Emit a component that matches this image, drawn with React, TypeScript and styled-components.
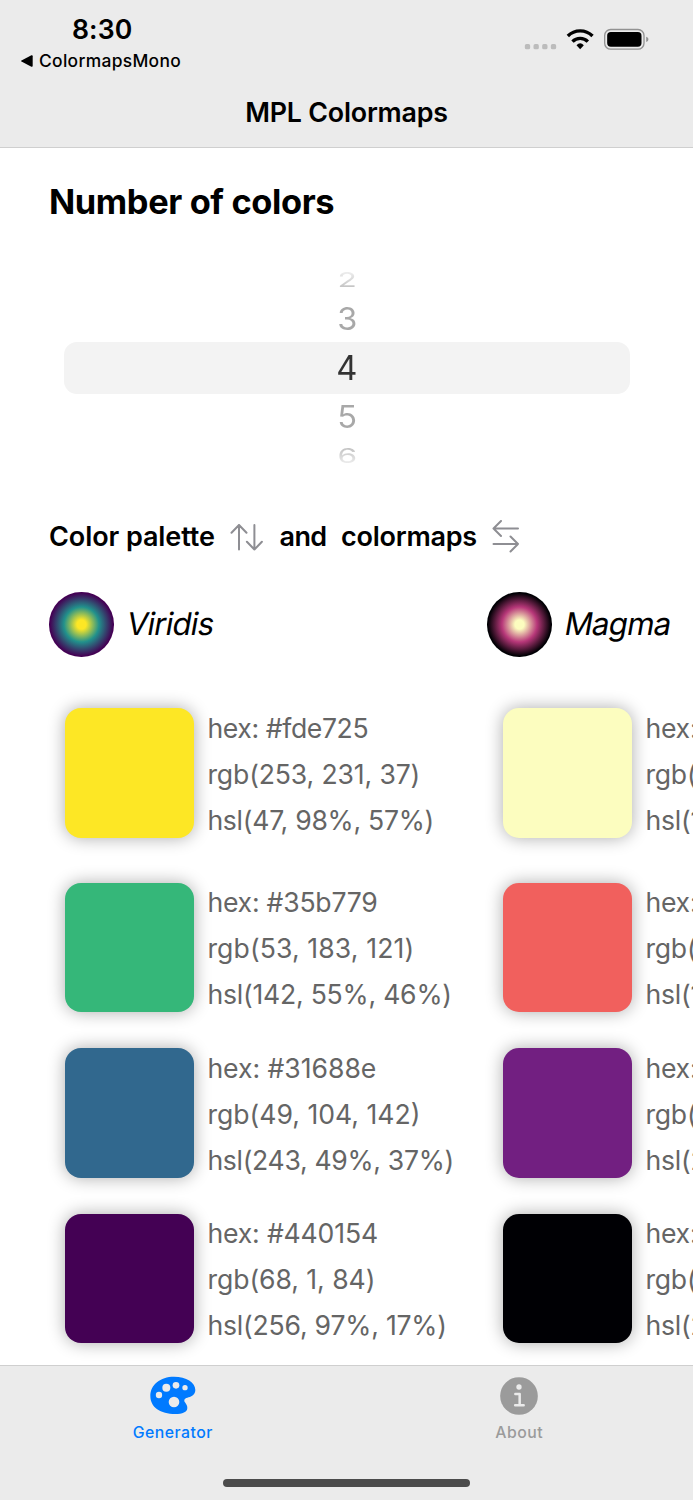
import React from "react";
import styled, { createGlobalStyle } from "styled-components";

const GlobalStyle = createGlobalStyle`
  *, *::before, *::after { box-sizing: border-box; }
  html, body { margin: 0; padding: 0; background: #fff; overflow: hidden; }
  body { font-family: Inter, "Liberation Sans", sans-serif; color: #000; }
  svg { display: block; flex: none; }
`;

const Screen = styled.div`
  width: 693px;
  height: 1500px;
  display: flex;
  flex-direction: column;
  overflow: hidden;
  background: #fff;
`;

const Header = styled.header`
  flex: none;
  height: 148px;
  background: #ebebeb;
  border-bottom: 1px solid #cfcfcf;
`;

const StatusBar = styled.div`
  height: 76px;
  display: flex;
  justify-content: space-between;
`;

const StatusLeft = styled.div`
  padding: 13px 0 0 21px;
`;

const Clock = styled.div`
  padding-left: 51px;
  line-height: 32px;
  font-size: 26.6px;
  font-weight: 600;
  letter-spacing: 0.1px;
`;

const BackLink = styled.div`
  display: flex;
  align-items: center;
  gap: 6px;
  line-height: 31px;
  font-size: 17.4px;
  font-weight: 500;
  letter-spacing: 0.32px;
`;

const StatusIcons = styled.div`
  padding: 27px 44px 0 0;
`;

const NavTitle = styled.h1`
  margin: 0;
  line-height: 73px;
  text-align: center;
  font-size: 26.8px;
  font-weight: 600;
  letter-spacing: -0.2px;
`;

const Content = styled.main`
  flex: 1;
  min-height: 0;
  overflow: hidden;
  padding: 33px 0 0 49px;
`;

const SectionTitle = styled.h2`
  margin: 0;
  line-height: 41px;
  font-size: 34.4px;
  font-weight: 700;
  letter-spacing: -0.38px;
`;

const Picker = styled.div`
  width: 566px;
  margin: 41.5px 0 0 14.5px;
  display: flex;
  flex-direction: column;
`;

const PickerRow = styled.div<{ $h: number; $selected?: boolean }>`
  height: ${(p) => p.$h}px;
  display: flex;
  align-items: center;
  justify-content: center;
  padding-left: 1px;
  border-radius: 13px;
  background: ${(p) => (p.$selected ? "#f3f3f3" : "transparent")};
`;

const PickerDigit = styled.span<{ $squash: number; $ink: string }>`
  font-size: 33.4px;
  line-height: 40px;
  transform: scale(${(p) => 0.9 + p.$squash * 0.08}, ${(p) => p.$squash});
  background: ${(p) => p.$ink};
  background-clip: text;
  -webkit-background-clip: text;
  color: transparent;
`;

const HintRow = styled.div`
  display: flex;
  align-items: center;
  height: 40px;
  margin-top: 46px;
  font-size: 27px;
  font-weight: 600;
  white-space: nowrap;
`;

const HintWord = styled.span<{ $w: number; $tracking: number }>`
  flex: none;
  width: ${(p) => p.$w}px;
  letter-spacing: ${(p) => p.$tracking}px;
`;

const HintIcon = styled.span<{ $w: number }>`
  flex: none;
  width: ${(p) => p.$w}px;
`;

const Maps = styled.div`
  display: flex;
  margin-top: 35.5px;
`;

const MapColumn = styled.section`
  flex: none;
  width: 438px;
`;

const MapHead = styled.div`
  display: flex;
  align-items: center;
  height: 65px;
`;

const Disc = styled.span<{ $stops: string[] }>`
  flex: none;
  width: 64.5px;
  height: 64.5px;
  margin-right: 13px;
  border-radius: 50%;
  background: radial-gradient(
    circle closest-side,
    ${(p) => p.$stops[0]} 14%,
    ${(p) => p.$stops[1]} 54%,
    ${(p) => p.$stops[2]} 97%
  );
`;

const MapName = styled.span`
  font-size: 31.2px;
  line-height: 41px;
  letter-spacing: -0.75px;
  transform: skewX(-10deg);
`;

const Entries = styled.div`
  display: flex;
  flex-direction: column;
  gap: 27.4px;
  padding: 47px 0 0 16px;
`;

const Entry = styled.div<{ $first: boolean }>`
  display: flex;
  align-items: center;
  height: 138px;
  margin-bottom: ${(p) => (p.$first ? 9.4 : 0)}px;
`;

const Swatch = styled.span<{ $color: string }>`
  flex: none;
  width: 129.4px;
  height: 129.4px;
  margin-right: 13px;
  border-radius: 16px;
  background: ${(p) => p.$color};
  box-shadow: 0 0 17px rgba(0, 0, 0, 0.33);
`;

const Values = styled.div`
  display: flex;
  flex-direction: column;
  padding-top: 1.4px;
`;

const Value = styled.span<{ $tracking: number }>`
  line-height: 46px;
  font-size: 26.6px;
  color: #656565;
  white-space: nowrap;
  letter-spacing: ${(p) => p.$tracking}px;
`;

const TabBar = styled.nav`
  flex: none;
  height: 135.5px;
  display: grid;
  grid-template-columns: 1fr 1fr;
  grid-template-rows: 1fr auto;
  background: #ebebeb;
  border-top: 1px solid #cfcfcf;
`;

const Tab = styled.div<{ $active?: boolean }>`
  display: flex;
  flex-direction: column;
  align-items: center;
  padding: 10px 1px 0 0;
  font-size: 15.8px;
  font-weight: 500;
  letter-spacing: 0.48px;
  line-height: 20px;
  color: ${(p) => (p.$active ? "#007aff" : "#9b9b9b")};
`;

const TabIcon = styled.span`
  height: 40px;
  display: flex;
  align-items: center;
  margin-bottom: 7px;
`;

const HomeIndicator = styled.div`
  grid-column: 1 / -1;
  justify-self: center;
  width: 247px;
  height: 8px;
  margin-bottom: 13.5px;
  border-radius: 4px;
  background: #4b4b4b;
`;

const StatusGlyphs = () => (
  <svg width="125" height="24" viewBox="72.500 51 375 72">
    {[83, 109, 135, 161].map((x) => (
      <rect key={x} x={x - 8} y="102" width="16" height="16" rx="5" fill="#bcbcbc" />
    ))}
    <g fill="none" stroke="#000" strokeWidth="10">
      <path d="M204 78A52 52 0 0 1 278 78" />
      <path d="M218 95A32 32 0 0 1 264 95" />
    </g>
    <path d="M230 106Q241 94 252 106L241 118Z" />
    <rect x="314.5" y="58.500" width="118" height="59" rx="18" fill="none" stroke="#929292" strokeWidth="4" />
    <rect x="322" y="66" width="103" height="44" rx="11" />
    <path d="M439 80C448 82 448 94 439 96Z" fill="#929292" />
  </svg>
);

const UpDownArrows = () => (
  <svg width="34" height="28" viewBox="0 0 34 28" fill="none" stroke="#8e8e93" strokeWidth="2" strokeLinecap="round" strokeLinejoin="round">
    <path d="M9 26.500V2M1.500 9.800L9 2L16.500 9.800M24.400 2V26.500M16.900 18.700L24.400 26.500L31.900 18.700" />
  </svg>
);

const LeftRightArrows = () => (
  <svg width="28" height="34" viewBox="0 0 28 34" fill="none" stroke="#8e8e93" strokeWidth="2" strokeLinecap="round" strokeLinejoin="round">
    <path d="M26 8.500H1.500M9 1L1.500 8.500L9 16M1.500 24H26M18.500 16.500L26 24L18.500 31.500" />
  </svg>
);

const PaletteIcon = () => (
  <svg width="46.670" height="38.670" viewBox="88 78 140 116">
    <path
      fill="#007aff"
      d="M92 138C92 104 122 80 163 80C200 80 227 97 227 120C227 136 213 141 203 143C194 145 192 151 196 157C200 163 203 167 203 174C203 187 188 192 167 192C122 192 92 172 92 138Z"
    />
    <g fill="#ebebeb">
      <circle cx="118" cy="135" r="9.500" />
      <circle cx="140" cy="113" r="12" />
      <circle cx="169" cy="106" r="10" />
      <circle cx="196" cy="113" r="8" />
      <circle cx="163" cy="156" r="16" />
    </g>
  </svg>
);

const InfoIcon = () => (
  <svg width="38" height="38" viewBox="60 50 114 114">
    <circle cx="117" cy="107" r="56.500" fill="#9b9b9b" />
    <circle cx="117" cy="80" r="8" fill="#ebebeb" />
    <path d="M106 101H119V134M105.500 134.500H131" fill="none" stroke="#ebebeb" strokeWidth="7.500" strokeLinecap="round" strokeLinejoin="round" />
  </svg>
);

type ColorEntry = { hex: string; rgb: string; hsl: string; tracking: [number, number, number] };
type ColorMap = { name: string; stops: string[]; colors: ColorEntry[] };

const colorMaps: ColorMap[] = [
  {
    name: "Viridis",
    stops: ["#fde725", "#21918c", "#440154"],
    colors: [
      { hex: "#fde725", rgb: "253, 231, 37", hsl: "47, 98%, 57%", tracking: [-0.38, -0.13, -0.27] },
      { hex: "#35b779", rgb: "53, 183, 121", hsl: "142, 55%, 46%", tracking: [-0.22, 0.12, -0.22] },
      { hex: "#31688e", rgb: "49, 104, 142", hsl: "243, 49%, 37%", tracking: [-0.03, 0, -0.31] },
      { hex: "#440154", rgb: "68, 1, 84", hsl: "256, 97%, 17%", tracking: [-0.16, -0.05, -0.2] },
    ],
  },
  {
    name: "Magma",
    stops: ["#fcfdbf", "#b73779", "#000004"],
    colors: [
      { hex: "#fcfdbf", rgb: "252, 253, 191", hsl: "120, 94%, 87%", tracking: [-0.2, -0.2, -0.2] },
      { hex: "#f1605d", rgb: "241, 96, 93", hsl: "1, 84%, 65%", tracking: [-0.2, -0.2, -0.2] },
      { hex: "#721f81", rgb: "114, 31, 129", hsl: "291, 61%, 31%", tracking: [-0.2, -0.2, -0.2] },
      { hex: "#000004", rgb: "0, 0, 4", hsl: "240, 100%, 1%", tracking: [-0.2, -0.2, -0.2] },
    ],
  },
];

export default function App() {
  return (
    <>
      <GlobalStyle />
      <Screen>
        <Header>
          <StatusBar>
            <StatusLeft>
              <Clock>8:30</Clock>
              <BackLink>
                <svg width="12" height="12" viewBox="0 0 12 12">
                  <path d="M0.500 5.400Q-0.500 6 0.500 6.600L10.400 11.700Q11.700 12.200 11.700 10.800V1.200Q11.700 -0.200 10.400 0.300Z" />
                </svg>
                ColormapsMono
              </BackLink>
            </StatusLeft>
            <StatusIcons>
              <StatusGlyphs />
            </StatusIcons>
          </StatusBar>
          <NavTitle>MPL Colormaps</NavTitle>
        </Header>
        <Content>
          <SectionTitle>Number of colors</SectionTitle>
          <Picker>
            <PickerRow $h={32}>
              <PickerDigit $squash={0.61} $ink="linear-gradient(#ececec 20%, #c4c4c4 80%)">2</PickerDigit>
            </PickerRow>
            <PickerRow $h={46.5}>
              <PickerDigit $squash={0.93} $ink="#a8a8a8">3</PickerDigit>
            </PickerRow>
            <PickerRow $h={51.5} $selected>
              <PickerDigit $squash={1} $ink="#333">4</PickerDigit>
            </PickerRow>
            <PickerRow $h={47}>
              <PickerDigit $squash={0.93} $ink="#a8a8a8">5</PickerDigit>
            </PickerRow>
            <PickerRow $h={30}>
              <PickerDigit $squash={0.61} $ink="linear-gradient(#c4c4c4 20%, #ececec 80%)">6</PickerDigit>
            </PickerRow>
          </Picker>
          <HintRow>
            <HintWord $w={181} $tracking={-0.08}>Color palette</HintWord>
            <HintIcon $w={49.5}>
              <UpDownArrows />
            </HintIcon>
            <HintWord $w={61.5} $tracking={-0.6}>and</HintWord>
            <HintWord $w={150.7} $tracking={-0.25}>colormaps</HintWord>
            <HintIcon $w={28}>
              <LeftRightArrows />
            </HintIcon>
          </HintRow>
          <Maps>
            {colorMaps.map((map) => (
              <MapColumn key={map.name}>
                <MapHead>
                  <Disc $stops={map.stops} />
                  <MapName>{map.name}</MapName>
                </MapHead>
                <Entries>
                  {map.colors.map((c, i) => (
                    <Entry key={c.hex} $first={i === 0}>
                      <Swatch $color={c.hex} />
                      <Values>
                        <Value $tracking={c.tracking[0]}>hex: {c.hex}</Value>
                        <Value $tracking={c.tracking[1]}>rgb({c.rgb})</Value>
                        <Value $tracking={c.tracking[2]}>hsl({c.hsl})</Value>
                      </Values>
                    </Entry>
                  ))}
                </Entries>
              </MapColumn>
            ))}
          </Maps>
        </Content>
        <TabBar>
          <Tab $active>
            <TabIcon>
              <PaletteIcon />
            </TabIcon>
            Generator
          </Tab>
          <Tab>
            <TabIcon>
              <InfoIcon />
            </TabIcon>
            About
          </Tab>
          <HomeIndicator />
        </TabBar>
      </Screen>
    </>
  );
}
